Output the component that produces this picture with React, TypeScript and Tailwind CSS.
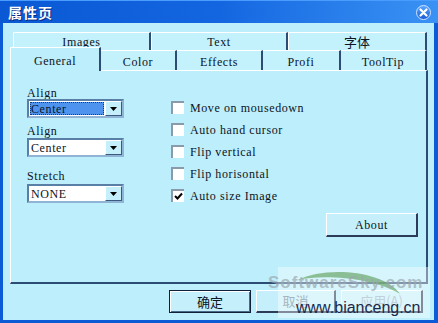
import React from "react";

const mono = "font-['Liberation_Serif',serif] text-[12px] tracking-[0.6px] text-[#0c1424]";

function CloseButton() {
  return (
    <div className="w-[15px] h-[15px] rounded-full bg-gradient-to-b from-[#5aa6ff] to-[#1a5ad8] border border-[#cfe4ff] flex items-center justify-center">
      <svg width="9" height="9" viewBox="0 0 9 9">
        <path d="M1.5 1.5 L7.5 7.5 M7.5 1.5 L1.5 7.5" stroke="#ffffff" strokeWidth="2.2" strokeLinecap="round" />
      </svg>
    </div>
  );
}

function TopTab({ label, w, cjk }: { label: string; w: string; cjk?: boolean }) {
  return (
    <div
      className={
        w +
        " h-[18px] flex items-center justify-center pt-[1px] border-t border-l border-t-white border-l-white border-r-2 border-r-[#2c4c74] bg-[#c3f1fc] " +
        (cjk ? "font-['Noto_Sans_CJK_SC',sans-serif] text-[13px] text-[#0c1424]" : mono)
      }
    >
      {label}
    </div>
  );
}

function BottomTab({ label, w, active }: { label: string; w: string; active?: boolean }) {
  if (active) {
    return (
      <div
        className={
          w +
          " h-[24px] -mb-px relative z-10 flex justify-center pt-[4px] border-t border-l border-t-white border-l-white border-r-2 border-r-[#2c4c74] bg-[#bdeefb] " +
          mono
        }
      >
        {label}
      </div>
    );
  }
  return (
    <div
      className={
        w +
        " h-[20px] flex items-center justify-center pt-[3px] border-t border-t-white border-r-2 border-r-[#2c4c74] bg-[#c3f1fc] " +
        mono
      }
    >
      {label}
    </div>
  );
}

function Combo({ value, focused }: { value: string; focused?: boolean }) {
  return (
    <div className="h-[19px] w-[97px] flex border-2 border-t-[#5a7fa6] border-l-[#5a7fa6] border-b-[#8fb4d6] border-r-[#8fb4d6] bg-white">
      <div className="flex-1 p-[1px]">
        <div
          className={
            "h-full flex items-center pl-[1px] " +
            (focused ? "bg-[#4e94ee] outline outline-1 outline-dotted outline-[#1a3a70] -outline-offset-1 " : "") +
            mono
          }
        >
          {value}
        </div>
      </div>
      <div className="w-[17px] flex items-center justify-center bg-[#c5f0fb] border-t border-l border-white border-r border-b border-r-[#3a5a7e] border-b-[#3a5a7e]">
        <svg width="7" height="4" viewBox="0 0 7 4">
          <path d="M0 0 H7 L3.5 4 Z" fill="#000000" />
        </svg>
      </div>
    </div>
  );
}

function Check({ label, checked }: { label: string; checked?: boolean }) {
  return (
    <div className="h-[13px] flex items-center gap-[6px]">
      <div className="w-[13px] h-[13px] bg-white border-t-2 border-l-2 border-t-[#8a9aaa] border-l-[#8a9aaa] flex items-center justify-center">
        {checked ? (
          <svg width="9" height="9" viewBox="0 0 9 9">
            <path d="M1 4 L3.5 6.5 L8 1.5" stroke="#000000" strokeWidth="2" fill="none" />
          </svg>
        ) : null}
      </div>
      <span className={mono}>{label}</span>
    </div>
  );
}

export default function App() {
  return (
    <div className="w-[438px] h-[323px] flex flex-col bg-[#0b5ad6] overflow-hidden relative">
      <div className="h-[23px] shrink-0 flex items-center justify-between pl-[8px] pr-[7px] bg-gradient-to-r from-[#0a58d4] via-[#1466e0] to-[#3a92f4] border-t border-t-[#4a9cff]">
        <span className="text-white font-bold text-[14px] tracking-[1px] font-['Noto_Sans_CJK_SC',sans-serif] [text-shadow:1px_1px_0_#0a2a80] pt-[1px]">
          属性页
        </span>
        <CloseButton />
      </div>

      <div className="flex-1 ml-[3px] mr-[4px] mb-[3px] bg-[#bdeefb] pl-[7px] flex flex-col">
        <div className="mt-[9px] ml-[3px] flex">
          <TopTab label="Images" w="w-[138px]" />
          <TopTab label="Text" w="w-[137px]" />
          <TopTab label="字体" w="w-[139px]" cjk />
        </div>
        <div className="-mt-[3px] h-[23px] flex items-end relative z-10">
          <BottomTab label="General" w="w-[91px]" active />
          <BottomTab label="Color" w="w-[76px]" />
          <BottomTab label="Effects" w="w-[86px]" />
          <BottomTab label="Profi" w="w-[78px]" />
          <BottomTab label="ToolTip" w="w-[86px]" />
        </div>

        <div className="w-[418px] h-[214px] flex border-t border-l border-white border-r-2 border-b-2 border-r-[#2c4c74] border-b-[#2c4c74]">
          <div className="ml-[16px] pt-[17px] w-[97px] flex flex-col">
            <div className={"h-[11px] leading-[11px] " + mono}>Align</div>
            <Combo value="Center" focused />
            <div className={"mt-[8px] h-[11px] leading-[11px] " + mono}>Align</div>
            <div className="mt-[1px]">
              <Combo value="Center" />
            </div>
            <div className={"mt-[14px] h-[11px] leading-[11px] " + mono}>Stretch</div>
            <div className="mt-[2px]">
              <Combo value="NONE" />
            </div>
          </div>

          <div className="ml-[47px] pt-[30px] w-[247px] flex flex-col">
            <div className="flex flex-col gap-[9px]">
              <Check label="Move on mousedown" />
              <Check label="Auto hand cursor" />
              <Check label="Flip vertical" />
              <Check label="Flip horisontal" />
              <Check label="Auto size Image" checked />
            </div>
            <button
              type="button"
              className={
                "self-end mt-[11px] w-[92px] h-[24px] bg-[#c5f0fb] border-t border-l border-white border-r-2 border-b-2 border-r-[#2c3c58] border-b-[#2c3c58] " +
                mono
              }
            >
              About
            </button>
          </div>
        </div>

        <div className="mt-[6px] pl-[159px] flex gap-[5px]">
          <button
            type="button"
            className="w-[82px] h-[23px] border border-[#10203a] bg-[#c5f0fb] shadow-[inset_1px_1px_0_#ffffff,inset_-1px_-1px_0_#4a6a8a] font-['Noto_Sans_CJK_SC',sans-serif] text-[13px] text-[#0c1424]"
          >
            确定
          </button>
          <button
            type="button"
            className="w-[80px] h-[23px] bg-[#c5f0fb] border-t border-l border-white border-r-2 border-b-2 border-r-[#2c3c58] border-b-[#2c3c58] font-['Noto_Sans_CJK_SC',sans-serif] text-[13px] text-[#6a8494]"
          >
            取消
          </button>
          <button
            type="button"
            className="w-[82px] h-[23px] bg-[#c5f0fb] border-t border-l border-white border-r-2 border-b-2 border-r-[#2c3c58] border-b-[#2c3c58] font-['Noto_Sans_CJK_SC',sans-serif] text-[13px] text-[#9ab2c0]"
          >
            应用(A)
          </button>
        </div>
      </div>

      {/* watermark over the bottom-right corner */}
      <div className="absolute left-[278px] top-[267px] w-[152px] h-[51px] bg-white/40 pointer-events-none" />
      <div className="absolute left-[268px] top-[270px] w-[170px] h-[48px] pointer-events-none">
        <svg className="absolute left-[26px] top-[0px]" width="110" height="28" viewBox="0 0 110 28">
          <path d="M4 10 C 30 -4, 90 0, 106 24 C 80 8, 30 4, 4 10 Z" fill="#6aa86a" opacity="0.7" />
        </svg>
        <div className="absolute left-0 top-[4px] font-['Liberation_Sans',sans-serif] font-bold text-[17px] leading-[18px] text-[#9aa8b0]/70 tracking-[1px]">
          SoftwareSky.com
        </div>
        <div className="absolute left-[28px] top-[30px] font-['Liberation_Sans',sans-serif] text-[16px] leading-[16px] text-[#1a2a4a]">
          www.bianceng.cn
        </div>
      </div>
    </div>
  );
}
